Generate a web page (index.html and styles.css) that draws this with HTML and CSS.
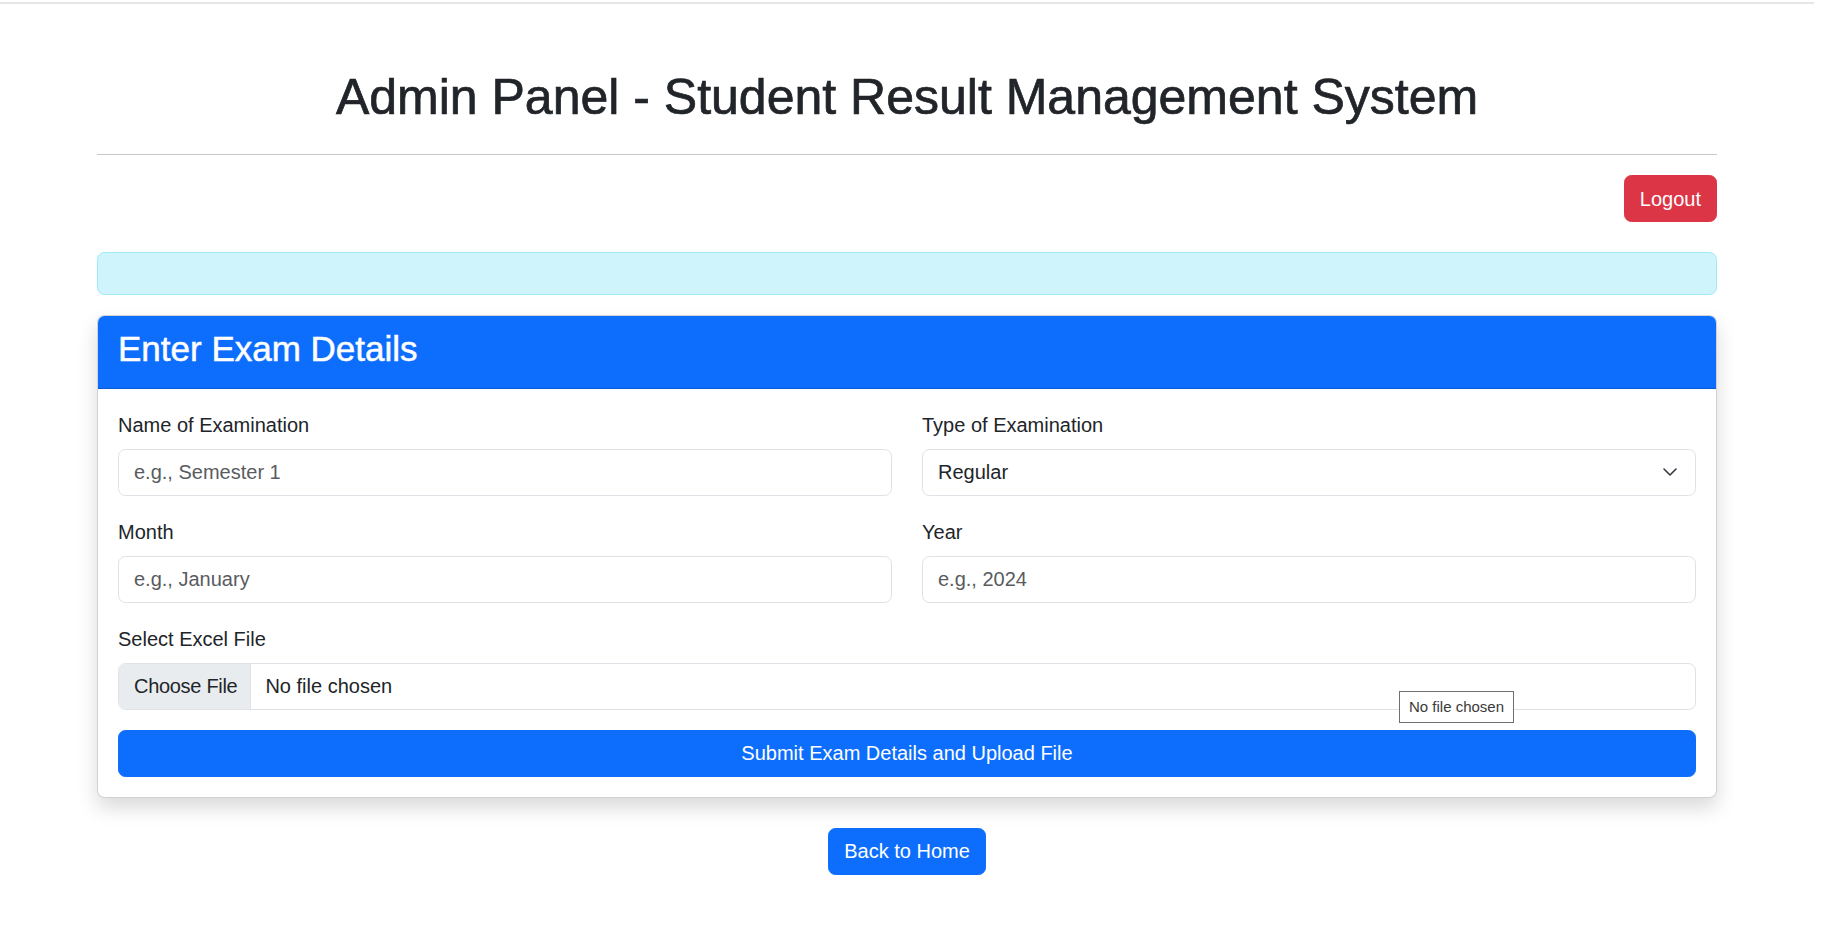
FILE: index.html
```html
<!DOCTYPE html>
<html lang="en">
<head>
<meta charset="utf-8">
<title>Admin Panel - Student Result Management System</title>
<link rel="stylesheet" href="styles.css">
</head>
<body>
<div class="chrome"></div>
<div class="container">
  <h1 class="title">Admin Panel - Student Result Management System</h1>
  <hr class="divider">
  <div class="actions"><a class="btn btn-danger" href="#">Logout</a></div>
  <div class="alert"></div>
  <div class="card">
    <div class="card-header"><h3 class="card-title">Enter Exam Details</h3></div>
    <div class="card-body">
      <div class="grid">
        <div class="field">
          <label class="label">Name of Examination</label>
          <input class="control" type="text" placeholder="e.g., Semester 1">
        </div>
        <div class="field">
          <label class="label">Type of Examination</label>
          <div class="control select">
            <span>Regular</span>
            <svg class="chevron" viewBox="0 0 16 16" width="16" height="16"><path d="M2 5l6 6 6-6" fill="none" stroke="#343a40" stroke-width="1.6" stroke-linecap="round" stroke-linejoin="round"/></svg>
          </div>
        </div>
        <div class="field">
          <label class="label">Month</label>
          <input class="control" type="text" placeholder="e.g., January">
        </div>
        <div class="field">
          <label class="label">Year</label>
          <input class="control" type="text" placeholder="e.g., 2024">
        </div>
      </div>
      <div class="field">
        <label class="label">Select Excel File</label>
        <div class="control file">
          <span class="file-btn">Choose File</span>
          <span class="file-name">No file chosen</span>
          <span class="tooltip">No file chosen</span>
        </div>
      </div>
      <button class="btn btn-primary btn-block" type="button">Submit Exam Details and Upload File</button>
    </div>
  </div>
  <div class="back"><a class="btn btn-primary" href="#">Back to Home</a></div>
</div>
</body>
</html>
```

FILE: styles.css
```css
* { box-sizing: border-box; }

html, body {
  margin: 0;
  background: #fff;
}

body {
  padding: 0 21px 0 0;
  font-family: "Liberation Sans", Arial, sans-serif;
  font-size: 20px;
  line-height: 30px;
  color: #212529;
}

.chrome {
  height: 4px;
  border-bottom: 2px solid #e6e6e6;
}

.container {
  max-width: 1620px;
  margin: 0 auto;
  padding-top: 60px;
}

.title {
  margin: 0 0 27px;
  padding-top: 3px;
  font-size: 50px;
  line-height: 60px;
  font-weight: 400;
  text-align: center;
  -webkit-text-stroke: 0.7px #212529;
}

.divider {
  margin: 20px 0;
  border: 0;
  border-top: 1.25px solid rgba(33, 37, 41, 0.25);
  height: 0;
}

.actions {
  display: flex;
  justify-content: flex-end;
  margin-bottom: 30px;
}

.btn {
  display: inline-block;
  padding: 7.5px 15px;
  font-family: inherit;
  font-size: 20px;
  line-height: 30px;
  border: 1.25px solid transparent;
  border-radius: 7.5px;
  color: #fff;
  text-decoration: none;
  text-align: center;
  cursor: pointer;
}

.btn-danger {
  background: #dc3545;
  border-color: #dc3545;
}

.btn-primary {
  background: #0d6efd;
  border-color: #0d6efd;
}

.btn-block {
  display: block;
  width: 100%;
  height: 47px;
  padding-top: 7px;
  padding-bottom: 7px;
}

.alert {
  height: 42.5px;
  margin-bottom: 20px;
  background: #cff4fc;
  border: 1.25px solid #9eeaf9;
  border-radius: 7.5px;
}

.card {
  background: #fff;
  border: 1.25px solid rgba(0, 0, 0, 0.175);
  border-radius: 7.5px;
  box-shadow: 0 10px 20px rgba(0, 0, 0, 0.15);
  overflow: hidden;
}

.card-header {
  background: #0d6efd;
  color: #fff;
  padding: 12px 20px 10px;
  border-bottom: 1.25px solid rgba(0, 0, 0, 0.175);
}

.card-title {
  margin: 0 0 8px;
  font-size: 35px;
  line-height: 42px;
  font-weight: 400;
  -webkit-text-stroke: 0.5px #fff;
}

.card-body {
  padding: 20px;
}

.grid {
  display: grid;
  grid-template-columns: 1fr 1fr;
  column-gap: 30px;
}

.field {
  margin-bottom: 20px;
}

.label {
  display: block;
  margin-bottom: 10px;
  padding-top: 1px;
  height: 30px;
  line-height: 30px;
}

.control {
  display: block;
  width: 100%;
  height: 47px;
  padding: 7px 15px;
  font-family: inherit;
  font-size: 20px;
  line-height: 30px;
  color: #212529;
  background: #fff;
  border: 1.25px solid #dee2e6;
  border-radius: 7.5px;
  outline: none;
}

.control::placeholder {
  color: #595c5f;
  opacity: 1;
}

.select {
  display: flex;
  align-items: center;
  justify-content: space-between;
  padding-right: 17px;
}

.chevron {
  display: block;
  flex: none;
}

.file {
  position: relative;
  display: flex;
  align-items: stretch;
  padding: 0;
}

.file-btn {
  display: flex;
  align-items: center;
  padding: 0 13px 0 15px;
  letter-spacing: -0.3px;
  background: #e9ecef;
  border-right: 1.25px solid #dee2e6;
  border-radius: 6.25px 0 0 6.25px;
}

.file-name {
  display: flex;
  align-items: center;
  padding-left: 14px;
}

.tooltip {
  position: absolute;
  left: 1280px;
  top: 27px;
  height: 32px;
  padding: 0 9px;
  font-size: 15px;
  line-height: 30px;
  color: #3a3a3a;
  background: #fff;
  border: 1px solid #6f6f6f;
  white-space: nowrap;
}

.back {
  display: flex;
  justify-content: center;
  margin-top: 30px;
}
```
